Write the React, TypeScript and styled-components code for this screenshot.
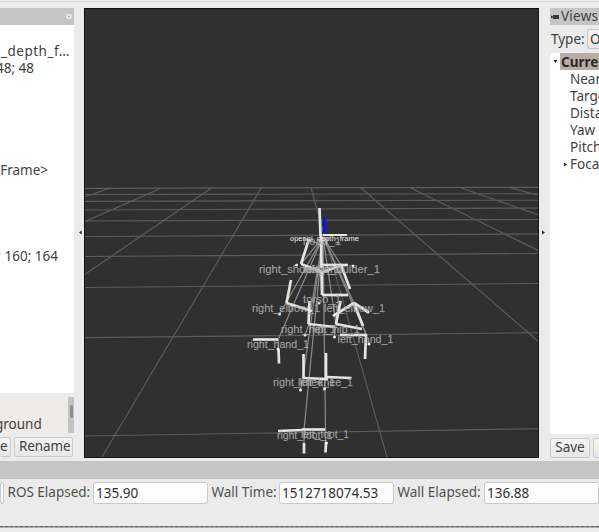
import React from "react";
import styled, { createGlobalStyle } from "styled-components";

const Global = createGlobalStyle`
  * { box-sizing: border-box; }
  body { margin: 0; background: #ebebeb; overflow: hidden; }
`;
const Window = styled.div`
  width: 599px; height: 532px; display: flex; flex-direction: column; overflow: hidden;
  background: #ebebeb; color: #3f3f3f; font: 13.5px/17px "Noto Sans", sans-serif;
`;
const TopEdge = styled.div`height: 8px; flex: none; background: linear-gradient(#eee 0 1px, #d2d2d2 1px 2px, #ececec 2px);`;
const Main = styled.div`display: flex; height: 450px; flex: none;`;
const SidePanel = styled.div<{ $w: number }>`
  width: ${p => p.$w}px; height: 450px; display: flex; flex-direction: column; overflow: hidden; flex: none;
`;
const TitleBar = styled.div<{ $end?: boolean }>`
  height: 17px; flex: none; background: #c5c5c5; display: flex; align-items: center; gap: 2px;
  padding: 0 ${p => (p.$end ? 2 : 0)}px; justify-content: ${p => (p.$end ? "flex-end" : "flex-start")};
`;
const Text = styled.span<{ $ls?: number; $bold?: boolean }>`
  white-space: pre; flex: none; letter-spacing: ${p => p.$ls ?? 0}px; font-weight: ${p => (p.$bold ? 700 : 400)};
`;
const LeftTree = styled.div`height: 368px; flex: none; background: #fff; padding-top: 18px;`;
const LeftRow = styled.div<{ $right: number }>`
  height: 17px; margin-bottom: 0.06px; display: flex; justify-content: flex-end; overflow: hidden;
  padding-right: ${p => p.$right}px;
`;
const Description = styled.div`
  margin-top: 4px; height: 36px; flex: none; background: #efebe7; display: flex; justify-content: space-between;
  align-items: flex-end; overflow: hidden;
`;
const DescriptionText = styled(Text)`margin-left: -5px;`;
const ScrollTrack = styled.div`width: 6px; height: 36px; background: #c3c3c3; padding: 8px 1px 0 2px;`;
const Thumb = styled.div`height: 13px; width: 3px; border-radius: 2px; background: #8d8d8d;`;
const ButtonRow = styled.div<{ $top: number }>`display: flex; gap: 3px; margin-top: ${p => p.$top}px; height: 20px; flex: none;`;
const Button = styled.button<{ $w: number; $cut?: boolean }>`
  width: ${p => p.$w}px; height: 20px; flex: none; padding: 0 4px 1px; font: inherit; color: #404040;
  border: 1px solid #cbcbcb; ${p => (p.$cut ? "border-left: 0; padding-left: 0;" : "")}
  border-radius: 2px; background: linear-gradient(#f4f4f4, #e7e7e7); line-height: 17px; overflow: hidden; white-space: pre;
`;
const Splitter = styled.div<{ $w: number; $side: "left" | "right" }>`
  width: ${p => p.$w}px; flex: none; display: flex; align-items: center;
  justify-content: ${p => (p.$side === "left" ? "flex-end" : "flex-start")}; padding: 0 ${p => (p.$side === "left" ? 1 : 2)}px 2px;
`;
const Viewport = styled.div`width: 455px; height: 450px; flex: none; background: #303030; svg { display: block; }`;
const TypeRow = styled.div`height: 28px; flex: none; display: flex; align-items: center; justify-content: space-between; padding-left: 1px;`;
const Combo = styled.div`
  height: 20px; width: 12px; border: 1px solid #c6c6c6; border-right: 0; border-radius: 3px 0 0 3px;
  background: linear-gradient(#f6f6f6, #e8e8e8); padding-left: 2px; overflow: hidden; line-height: 18px;
`;
const RightTree = styled.div`height: 381px; flex: none; background: #fff;`;
const TreeRow = styled.div<{ $depth: number }>`
  height: 17px; display: flex; align-items: center; padding-left: ${p => (p.$depth ? 13 : 3)}px;
  ${p => (p.$depth ? "padding-top: 2px;" : "")}
`;
const Arrow = styled.span<{ $w: number }>`width: ${p => p.$w}px; flex: none; display: flex; align-items: center;`;
const Selected = styled.div`
  flex: 1; height: 17px; background: #b8aea6; color: #282828; overflow: hidden; padding-left: 1px; line-height: 18px;
`;
const TimeTitle = styled.div`height: 18px; margin-top: 3px; flex: none; background: #c5c5c5;`;
const TimeRow = styled.div`height: 23px; margin-top: 2px; display: flex; align-items: center; flex: none;`;
const Label = styled.div<{ $w: number; $pad: number }>`
  width: ${p => p.$w}px; padding-left: ${p => p.$pad}px; flex: none; white-space: pre; color: #505050;
`;
const Field = styled.div<{ $w: number }>`
  width: ${p => p.$w}px; height: 22px; flex: none; padding: 1px ${p => (p.$w > 10 ? 2 : 0)}px;
  border: 1px solid #c9c9c9; border-radius: 3px;
  background: linear-gradient(#fff, #fafafa); color: #303030; line-height: 18px; white-space: pre;
`;
const StatusEdge = styled.div`
  margin-top: 22px; height: 2px; flex: none; border-top: 1px dashed #606865; border-bottom: 1px solid #a9aeab; background: #8c9490;
`;

const Triangle = ({ dir }: { dir: "left" | "right" | "down" }) => (
  <svg width="5" height="5" viewBox="0 0 5 5">
    <path fill="#222" d={dir === "left" ? "M3.7.5v4L1 2.5z" : dir === "right" ? "M1 .5v4l3-2z" : "M.5 1h4l-2 3z"} />
  </svg>
);

const horizons = [
  [188.3, 187.3], [194.5, 193.7], [201.3, 200.2], [210, 208], [221, 219.5],
  [236.5, 234], [256.5, 253.5], [287.5, 283.5], [337.7, 332.7], [436, 428.7],
];
const rays = [
  [84, 197, 110, 188.3], [84, 222, 161, 188.3], [84, 275, 211, 188.3], [102, 457, 261, 188.3], [311, 188, 387, 457],
  [361, 188, 539, 342], [411, 188, 539, 251], [461, 188, 539, 215], [509, 187.4, 539, 195.5],
];
const links = [
  [301, 264], [286, 303], [278, 340], [308.5, 324], [303, 378], [304, 430],
  [325.5, 430], [336, 324], [341, 265], [354, 303], [366, 334],
];
const axes = [
  [319.5, 208, 320.5, 236], [321, 234, 321.5, 268], [309, 239, 301, 264], [301, 264, 322, 272],
  [322, 265, 348, 265], [341, 265, 350, 289], [341, 265, 321, 273], [321.5, 271, 322, 295], [322, 295, 348, 295],
  [291, 280, 286.5, 303], [286.5, 303, 312, 311], [354, 303, 333, 316], [354, 303, 363, 326], [354, 303, 368, 312],
  [309.5, 301, 308.5, 324], [308.5, 324, 335, 327], [340.5, 301, 336, 324], [336, 324, 362, 329],
  [253, 339.5, 278, 339.5], [278.5, 349, 279, 363.5], [340, 335, 366, 335], [366, 334, 365, 359],
  [303.5, 354, 303.5, 378], [303, 378, 328, 379], [326, 353, 326, 378], [326, 377, 351.5, 378],
  [278, 431, 303, 430], [302, 429.5, 325, 429.5], [304, 443, 304, 453.5], [326, 442, 325.5, 452.5],
];
const tips = [[296.5, 265], [353, 266], [319, 303], [279.5, 314], [368, 312], [305, 335], [334.5, 337], [278, 349], [369, 344], [300.5, 390], [324.5, 389], [326.5, 443]];
const frames: [string, number, number, number][] = [
  ["right_shoulder_1", 259, 273, 84], ["left_shoulder_1", 303, 273, 77], ["neck_1", 304, 273, 36], ["head_1", 303, 245, 38],
  ["torso_1", 303, 303, 38], ["right_elbow_1", 252, 312, 68], ["left_elbow_1", 324, 312, 61],
  ["right_hip_1", 281, 333, 55], ["left_hip_1", 312, 333, 48], ["right_hand_1", 247, 347.5, 62], ["left_hand_1", 337.5, 343, 56],
  ["right_knee_1", 273, 386, 62], ["left_knee_1", 298, 385.5, 55], ["right_foot_1", 277, 438.5, 55], ["left_foot_1", 301, 437.5, 48],
];

const Scene = () => (
  <svg width="455" height="450" viewBox="84 8 455 450" fontFamily="Liberation Sans, sans-serif">
    <g stroke="#5c5c5c" strokeWidth="1.15">
      {horizons.map(([a, b]) => <line key={a} x1="84" y1={a} x2="539" y2={b} />)}
      {rays.map(([a, b, c, d]) => <line key={c + b} x1={a} y1={b} x2={c} y2={d} />)}
    </g>
    <g stroke="#8c8c8c" strokeWidth="1.2">
      {links.map(([x, y]) => <line key={x} x1="323" y1="237" x2={x} y2={y} />)}
      <line x1="278.5" y1="340" x2="278.5" y2="350" /><line x1="304" y1="430" x2="304" y2="445" />
      <line x1="325.5" y1="430" x2="325.5" y2="444" />
      <line x1="354" y1="303" x2="366" y2="334" /><line x1="309" y1="324" x2="305" y2="335" />
      <line x1="336" y1="324" x2="334.5" y2="337" /><line x1="286" y1="303" x2="279.5" y2="314" />
      <line x1="303" y1="378" x2="300.5" y2="390" />
    </g>
    <g stroke="#e4e4e4" strokeWidth="2.7">
      {axes.map(([a, b, c, d], i) => <line key={i} x1={a} y1={b} x2={c} y2={d} />)}
    </g>
    <g fill="#eee">{tips.map(([x, y]) => <circle key={x} cx={x} cy={y} r="1.5" />)}</g>
    <line x1="323" y1="235" x2="347" y2="235" stroke="#dfeeda" strokeWidth="2" />
    <line x1="324.5" y1="217" x2="324.5" y2="233.5" stroke="#0815ed" strokeWidth="2.8" />
    <rect x="324" y="237" width="2" height="2" fill="#bf6258" />
    <g fill="#b0b0b0" fillOpacity=".9" fontSize="11.5" stroke="#a8a8a8" strokeOpacity=".45" strokeWidth=".25">
      {frames.map(([t, x, y, w]) => <text key={t} x={x} y={y} textLength={w} lengthAdjust="spacingAndGlyphs">{t}</text>)}
    </g>
    <text x="290" y="241" textLength="69" lengthAdjust="spacingAndGlyphs" fill="#eee" fontSize="7.8">openni_depth_frame</text>
    <path d="M84.5 458V8.5H539" fill="none" stroke="#101010" />
    <path d="M84 457.5H538.5V8" fill="none" stroke="#171717" />
  </svg>
);

const leftRows: [string, number, number?][] = [
  ["_depth_f…", 4, 0.5], ["48; 48", 40], ["", 0], ["", 0], ["", 0], ["", 0], ["", 0], ["Frame>", 26],
  ["", 0], ["", 0], ["", 0], ["", 0], ["; 160; 164", 16],
];

export default function App() {
  return (
    <Window>
      <Global />
      <TopEdge />
      <Main>
        <SidePanel $w={74}>
          <TitleBar $end>
            <svg width="6" height="7"><rect x=".5" y="1" width="5" height="5" rx="1.5" fill="#eee" /><circle cx="3" cy="3.5" r="1" fill="#aaa" /></svg>
          </TitleBar>
          <LeftTree>
            {leftRows.map(([t, r, ls], i) => <LeftRow key={i} $right={r}><Text $ls={ls}>{t}</Text></LeftRow>)}
          </LeftTree>
          <Description>
            <DescriptionText>ground</DescriptionText>
            <ScrollTrack><Thumb /></ScrollTrack>
          </Description>
          <ButtonRow $top={4}>
            <Button $w={11} $cut>e</Button>
            <Button $w={59}><Text $ls={-0.1}>Rename</Text></Button>
          </ButtonRow>
        </SidePanel>
        <Splitter $w={10} $side="left"><Triangle dir="left" /></Splitter>
        <Viewport><Scene /></Viewport>
        <Splitter $w={11} $side="right"><Triangle dir="right" /></Splitter>
        <SidePanel $w={49}>
          <TitleBar>
            <svg width="9" height="7"><path d="M1 2.5l2 1V2h6v4H3V4.5l-2 1z" fill="#383838" /></svg>
            <Text $ls={0.25}>Views</Text>
          </TitleBar>
          <TypeRow><Text>Type:</Text><Combo>O</Combo></TypeRow>
          <RightTree>
            <TreeRow $depth={0}><Arrow $w={7}><Triangle dir="down" /></Arrow><Selected><Text $bold>Current</Text></Selected></TreeRow>
            {["Near", "Target", "Distance", "Yaw", "Pitch", "Focal"].map(t => (
              <TreeRow key={t} $depth={1}><Arrow $w={7}>{t === "Focal" && <Triangle dir="right" />}</Arrow><Text>{t}</Text></TreeRow>
            ))}
          </RightTree>
          <ButtonRow $top={4}><Button $w={40}>Save</Button><Button $w={40}>Rename</Button></ButtonRow>
        </SidePanel>
      </Main>
      <TimeTitle />
      <TimeRow>
        <Field $w={4} />
        <Label $w={89} $pad={3.5}>ROS Elapsed:</Label><Field $w={115}>135.90</Field>
        <Label $w={71} $pad={3.5}>Wall Time:</Label><Field $w={115}>1512718074.53</Field>
        <Label $w={90} $pad={3.5}>Wall Elapsed:</Label><Field $w={115}>136.88</Field>
      </TimeRow>
      <StatusEdge />
    </Window>
  );
}
